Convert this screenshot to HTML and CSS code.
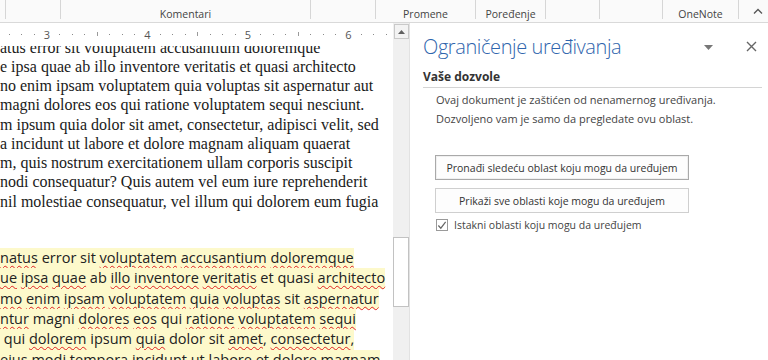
FILE: index.html
```html
<!DOCTYPE html>
<html>
<head>
<meta charset="utf-8">
<link rel="stylesheet" href="styles.css">
</head>
<body>
<div class="app">
  <div class="ribbon">
    <div class="grp g1"></div>
    <div class="grp g2"></div>
    <div class="grp g3"><span>Komentari</span></div>
    <div class="grp g4"></div>
    <div class="grp g5"><span>Promene</span></div>
    <div class="grp g6"><span>Poređenje</span></div>
    <div class="grp g7"></div>
    <div class="grp g8"></div>
    <div class="grp g9"><span>OneNote</span></div>
    <div class="grp g10">
      <svg class="caret" width="10" height="6" viewBox="0 0 10 6"><path d="M1 5.5 L5 1.5 L9 5.5" fill="none" stroke="#555" stroke-width="1.3"/></svg>
    </div>
  </div>
  <div class="main">
    <div class="docpane">
      <div class="ruler" id="ruler"></div>
      <div class="doc">
        <div class="serif">
          <p>atus error sit voluptatem accusantium doloremque</p>
          <p>e ipsa quae ab illo inventore veritatis et quasi architecto</p>
          <p>no enim ipsam voluptatem quia voluptas sit aspernatur aut</p>
          <p>magni dolores eos qui ratione voluptatem sequi nesciunt.</p>
          <p>m ipsum quia dolor sit amet, consectetur, adipisci velit, sed</p>
          <p>a incidunt ut labore et dolore magnam aliquam quaerat</p>
          <p>m, quis nostrum exercitationem ullam corporis suscipit</p>
          <p>nodi consequatur? Quis autem vel eum iure reprehenderit</p>
          <p>nil molestiae consequatur, vel illum qui dolorem eum fugia</p>
        </div>
        <div class="sans">
          <p><span class="hl"><u>natus</u> error sit <u>voluptatem</u> <u>accusantium</u> <u>doloremque</u></span></p>
          <p><span class="hl"><u>ue</u> <u>ipsa</u> <u>quae</u> ab <u>illo</u> <u>inventore</u> <u>veritatis</u> et quasi <u>architecto</u></span></p>
          <p><span class="hl"><u>mo</u> <u>enim</u> <u>ipsam</u> <u>voluptatem</u> <u>quia</u> <u>voluptas</u> sit <u>aspernatur</u></span></p>
          <p><span class="hl"><u>ntur</u> magni <u>dolores</u> <u>eos</u> qui <u>ratione</u> <u>voluptatem</u> <u>sequi</u></span></p>
          <p><span class="hl">&nbsp;qui <u>dolorem</u> ipsum <u>quia</u> dolor sit <u>amet</u>, <u>consectetur</u>,</span></p>
          <p><span class="hl"><u>eius</u> <u>modi</u> <u>tempora</u> <u>incidunt</u> ut <u>labore</u> et <u>dolore</u> <u>magnam</u></span></p>
        </div>
      </div>
    </div>
    <div class="vscroll">
      <div class="sbtn"><svg width="7" height="4" viewBox="0 0 7 4"><path d="M0 4 L3.5 0 L7 4 Z" fill="#606060"/></svg></div>
      <div class="strack"><div class="thumb"></div></div>
    </div>
    <div class="panel">
      <div class="phead">
        <h1>Ograničenje uređivanja</h1>
        <svg class="drop" width="9" height="5" viewBox="0 0 9 5"><path d="M0 0 L9 0 L4.5 5 Z" fill="#777"/></svg>
        <svg class="close" width="11" height="11" viewBox="0 0 11 11"><path d="M1 1 L10 10 M10 1 L1 10" stroke="#666" stroke-width="1.4"/></svg>
      </div>
      <h2>Vaše dozvole</h2>
      <div class="info">
        <p>Ovaj dokument je zaštićen od nenamernog uređivanja.</p>
        <p>Dozvoljeno vam je samo da pregledate ovu oblast.</p>
      </div>
      <div class="btns">
        <div class="btn primary">Pronađi sledeću oblast koju mogu da uređujem</div>
        <div class="btn">Prikaži sve oblasti koje mogu da uređujem</div>
      </div>
      <div class="check">
        <span class="box"><svg width="11" height="11" viewBox="0 0 11 11"><path d="M1.5 5.5 L4.2 8.5 L9.5 1.5" fill="none" stroke="#666" stroke-width="1.3"/></svg></span>
        <span>Istakni oblasti koju mogu da uređujem</span>
      </div>
    </div>
  </div>
</div>
<script src="ruler.js"></script>
</body>
</html>
```
FILE: ruler.js
```js
(function () {
  var r = document.getElementById('ruler');
  var labels = {0: '3', 8: '4', 16: '5', 24: '6'};
  for (var k = -3; k <= 27; k++) {
    var c = document.createElement('div');
    c.className = 'rc';
    var m = ((k % 8) + 8) % 8;
    if (labels[k] !== undefined) {
      c.textContent = labels[k];
      c.classList.add('num');
    } else if (m === 4) {
      c.innerHTML = '<i class="tick"></i>';
    } else {
      c.innerHTML = '<i class="dot"></i>';
    }
    r.appendChild(c);
  }
})();
```
FILE: styles.css
```css
* { box-sizing: border-box; }
html, body { margin: 0; padding: 0; }
body { width: 768px; height: 360px; overflow: hidden; background: #fff; font-family: "Open Sans", "Noto Sans", sans-serif; }
.app { width: 768px; height: 360px; display: flex; flex-direction: column; }

.ribbon { height: 23px; flex: none; display: flex; background: #fafafa; border-bottom: 1px solid #d9d9d9; }
.grp { height: 19px; border-right: 1px solid #d6d6d6; display: flex; align-items: flex-end; justify-content: center; font-size: 10.5px; color: #444; line-height: 14px; }
.grp span { position: relative; top: 2px; }
.g1 { width: 6px; }
.g2 { width: 55px; }
.g3 { width: 250px; }
.g4 { width: 65px; }
.g5 { width: 100px; }
.g6 { width: 70px; }
.g7 { width: 54px; }
.g8 { width: 63px; }
.g9 { width: 76px; }
.g10 { flex: 1; border-right: none; justify-content: flex-end; padding-right: 5px; align-items: center; padding-top: 3px; }

.main { flex: 1; display: flex; min-height: 0; }
.docpane { width: 393px; flex: none; display: flex; flex-direction: column; background: #fff; }
.ruler { height: 23px; flex: none; display: flex; align-items: flex-start; padding-left: 3px; padding-top: 3px; overflow: hidden; background: #fff; }
.rc { width: 12.5625px; height: 16px; flex: none; display: flex; align-items: center; justify-content: center; font-size: 11px; color: #555; }
.dot { display: block; width: 1px; height: 1px; background: #8a8a8a; }
.tick { display: block; width: 1px; height: 4px; background: #9a9a9a; }

.doc { flex: 1; overflow: hidden; }
.doc p { margin: 0; white-space: nowrap; }
.serif { font-family: "Liberation Serif", "Times New Roman", serif; font-size: 16px; line-height: 19.25px; color: #1a1a1a; margin-top: -8.5px; }
.sans { font-family: "Open Sans", "Noto Sans", sans-serif; font-size: 14.5px; line-height: 20.4px; color: #222; margin-top: 37px; }
.hl { background: #fdf9cb; display: inline-block; height: 20.4px; }
.sans u { text-decoration: underline wavy #e02020; text-decoration-thickness: 1px; text-underline-offset: 2px; }

.vscroll { width: 17px; flex: none; background: #f0f0f0; border-right: 1px solid #e2e2e2; display: flex; flex-direction: column; padding-top: 1px; }
.sbtn { height: 15px; margin: 0 0 0 1px; border: 1px solid #c9c9c9; background: #f3f3f3; display: flex; align-items: center; justify-content: center; }
.strack { flex: 1; padding-top: 198px; }
.thumb { height: 70px; border: 1px solid #c2c2c2; background: #fff; }

.panel { flex: 1; background: #fff; padding: 8px 6px 0 13px; }
.phead { display: flex; align-items: center; height: 30px; }
.phead h1 { margin: 0; font-weight: 300; font-size: 20px; letter-spacing: -0.4px; color: #2f65ad; flex: 1; }
.drop { margin-right: 33px; margin-top: 2px; }
.close { margin-right: 5px; margin-top: 1px; }
h2 { margin: 8px 0 0 0; font-size: 12px; font-weight: 700; color: #333; padding-bottom: 2px; border-bottom: 1px solid #d4d4d4; line-height: 16px; }
.info { padding-left: 13px; padding-top: 2px; font-size: 11px; color: #444; }
.info p { margin: 0; line-height: 19px; }
.btns { padding-left: 12px; padding-top: 27px; display: flex; flex-direction: column; gap: 8px; }
.btn { width: 254px; height: 25px; border: 1px solid #cfcfcf; background: #fdfdfd; display: flex; align-items: center; justify-content: center; font-size: 10.5px; color: #333; white-space: nowrap; }
.btn.primary { border: 1px solid #a9a9a9; box-shadow: inset 0 0 0 1px #f0f0f0; }
.check { display: flex; align-items: center; padding-left: 13px; padding-top: 5px; font-size: 10.5px; color: #444; gap: 6px; }
.box { width: 12px; height: 12px; border: 1px solid #9a9a9a; background: #fff; display: flex; align-items: center; justify-content: center; }
```
